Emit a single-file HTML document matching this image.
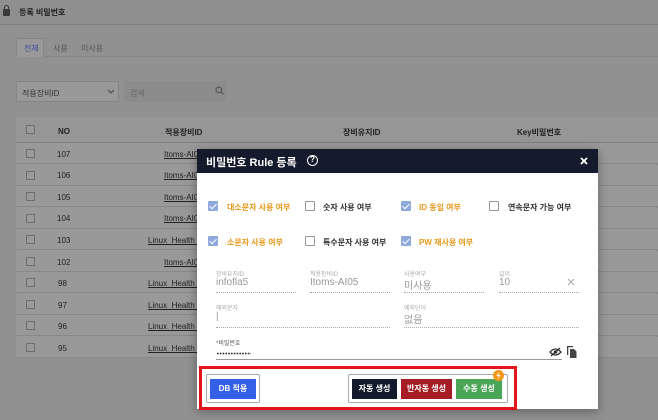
<!DOCTYPE html><html><head><meta charset="utf-8"><style>
*{margin:0;padding:0;box-sizing:border-box}
body{width:658px;height:420px;overflow:hidden;background:#919191;font-family:"Liberation Sans","Noto Sans CJK KR",sans-serif;position:relative;font-size:8px;color:#222}
.a{position:absolute}
.row{position:absolute;left:16px;width:642px;height:21px;border-bottom:1px solid #888;background:#999}
.cb{position:absolute;width:9px;height:9px;border:1px solid #6e6e6e;background:#9a9a9a}
.u{text-decoration:underline}
.m{position:absolute;left:197px;top:149px;width:401px;height:260px;background:#fff;box-shadow:0 2px 10px rgba(0,0,0,.35)}
.mc{position:absolute;width:10px;height:10px;border:1px solid #999;border-radius:1px;background:#fff}
.mc.on{background:#8fa9dc;border-color:#8fa9dc}
.mc.on:after{content:"";position:absolute;left:2px;top:0px;width:3px;height:6px;border:solid #fff;border-width:0 1.5px 1.5px 0;transform:rotate(45deg)}
.lb{position:absolute;font-size:8px;font-weight:bold;color:#333}
.or{color:#e89a1c}
.fl{position:absolute;font-size:6px;color:#aaa}
.fv{position:absolute;font-size:10px;color:#999}
.dl{position:absolute;height:0;border-top:1px dotted #aaa}
.btn{position:absolute;height:20px;color:#fff;font-size:8px;font-weight:bold;text-align:center;line-height:20px}
</style></head><body>
<div class="a" style="left:0;top:0;width:658px;height:25px;background:#8f8f8f;border-bottom:1px solid #7d7d7d"></div>
<div class="a" style="left:3px;top:9px;width:7px;height:7px;background:#3a3a3a;border-radius:1px"></div>
<div class="a" style="left:4px;top:5px;width:5px;height:6px;border:1.5px solid #3a3a3a;border-bottom:none;border-radius:3px 3px 0 0"></div>
<div class="a" style="left:19px;top:7px;font-size:8px;font-weight:bold;color:#222">등록 비밀번호</div>
<div class="a" style="left:16px;top:56px;width:642px;border-top:1px solid #858585"></div>
<div class="a" style="left:16px;top:38px;width:28px;height:19px;background:#999;border:1px solid #858585;border-bottom:none"></div>
<div class="a" style="left:24px;top:43px;color:#3a52a0">전체</div>
<div class="a" style="left:53px;top:43px;color:#555">사용</div>
<div class="a" style="left:81px;top:43px;color:#555">미사용</div>
<div class="a" style="left:16px;top:81px;width:103px;height:21px;background:#999;border:1px solid #858585"></div>
<div class="a" style="left:22px;top:88px;color:#333">적용장비ID</div>
<svg class="a" style="left:107px;top:89px" width="8" height="5" viewBox="0 0 8 5"><path d="M1 1L4 4L7 1" fill="none" stroke="#555" stroke-width="1.3"/></svg>
<div class="a" style="left:124px;top:81px;width:103px;height:21px;background:#8c8c8c"></div>
<div class="a" style="left:130px;top:88px;color:#666">검색</div>
<svg class="a" style="left:215px;top:86px" width="9" height="9" viewBox="0 0 9 9"><circle cx="3.8" cy="3.8" r="2.8" fill="none" stroke="#555" stroke-width="1.2"/><path d="M6 6L8.5 8.5" stroke="#555" stroke-width="1.2"/></svg>
<div class="a" style="left:16px;top:117px;width:642px;height:241px;background:#999;border:1px solid #868686"></div>
<div class="row" style="top:117px;height:26px;background:#969696;border-bottom:1px solid #7f7f7f"></div>
<div class="cb" style="left:26px;top:125px"></div>
<div class="a" style="left:58px;top:127px;font-weight:bold">NO</div>
<div class="a" style="left:165px;top:127px;font-weight:bold">적용장비ID</div>
<div class="a" style="left:343px;top:127px;font-weight:bold">장비유지ID</div>
<div class="a" style="left:517px;top:127px;font-weight:bold">Key비밀번호</div>
<div class="row" style="top:143px"></div><div class="cb" style="left:26px;top:149px"></div><div class="a" style="left:57px;top:150px">107</div><div class="a u" style="left:164px;top:150px">Itoms-AI0</div>
<div class="row" style="top:165px"></div><div class="cb" style="left:26px;top:171px"></div><div class="a" style="left:57px;top:171px">106</div><div class="a u" style="left:164px;top:171px">Itoms-AI0</div>
<div class="row" style="top:186px"></div><div class="cb" style="left:26px;top:192px"></div><div class="a" style="left:57px;top:193px">105</div><div class="a u" style="left:164px;top:193px">Itoms-AI0</div>
<div class="row" style="top:208px"></div><div class="cb" style="left:26px;top:214px"></div><div class="a" style="left:57px;top:214px">104</div><div class="a u" style="left:164px;top:214px">Itoms-AI0</div>
<div class="row" style="top:229px"></div><div class="cb" style="left:26px;top:235px"></div><div class="a" style="left:57px;top:236px">103</div><div class="a u" style="left:148px;top:236px">Linux_Health_</div>
<div class="row" style="top:251px"></div><div class="cb" style="left:26px;top:257px"></div><div class="a" style="left:57px;top:258px">102</div><div class="a u" style="left:164px;top:258px">Itoms-AI0</div>
<div class="row" style="top:272px"></div><div class="cb" style="left:26px;top:278px"></div><div class="a" style="left:58px;top:279px">98</div><div class="a u" style="left:148px;top:279px">Linux_Health_</div>
<div class="row" style="top:294px"></div><div class="cb" style="left:26px;top:300px"></div><div class="a" style="left:58px;top:301px">97</div><div class="a u" style="left:148px;top:301px">Linux_Health_</div>
<div class="row" style="top:315px"></div><div class="cb" style="left:26px;top:321px"></div><div class="a" style="left:58px;top:322px">96</div><div class="a u" style="left:148px;top:322px">Linux_Health_</div>
<div class="row" style="top:337px"></div><div class="cb" style="left:26px;top:343px"></div><div class="a" style="left:58px;top:344px">95</div><div class="a u" style="left:148px;top:344px">Linux_Health_</div>

<div class="m">
<div class="a" style="left:0;top:0;width:401px;height:24px;background:#141b2c"></div>
<div class="a" style="left:9px;top:5px;color:#fff;font-size:11px;font-weight:bold">비밀번호 Rule 등록</div>
<div class="a" style="left:110px;top:6px;width:11px;height:11px;border:1.5px solid #fff;border-radius:50%;color:#fff;font-size:8px;font-weight:bold;text-align:center;line-height:8px">?</div>
<svg class="a" style="left:383px;top:8px" width="8" height="8" viewBox="0 0 8 8"><path d="M1 1L7 7M7 1L1 7" stroke="#fff" stroke-width="1.8"/></svg>
<div class="mc on" style="left:11px;top:52px"></div><div class="lb or" style="left:30px;top:53px">대소문자 사용 여부</div>
<div class="mc" style="left:108px;top:52px"></div><div class="lb" style="left:126px;top:53px">숫자 사용 여부</div>
<div class="mc on" style="left:204px;top:52px"></div><div class="lb or" style="left:222px;top:53px">ID 동일 여부</div>
<div class="mc" style="left:292px;top:52px"></div><div class="lb" style="left:311px;top:53px">연속문자 가능 여부</div>
<div class="mc on" style="left:11px;top:87px"></div><div class="lb or" style="left:30px;top:88px">소문자 사용 여부</div>
<div class="mc" style="left:108px;top:87px"></div><div class="lb" style="left:126px;top:88px">특수문자 사용 여부</div>
<div class="mc on" style="left:204px;top:87px"></div><div class="lb or" style="left:222px;top:88px">PW 재사용 여부</div>
<div class="fl" style="left:19px;top:120px">장비유지ID</div><div class="fv" style="left:19px;top:128px">infofla5</div><div class="dl" style="left:19px;top:143px;width:80px"></div>
<div class="fl" style="left:113px;top:120px">적용장비ID</div><div class="fv" style="left:113px;top:128px">Itoms-AI05</div><div class="dl" style="left:113px;top:143px;width:80px"></div>
<div class="fl" style="left:207px;top:120px">사용여부</div><div class="fv" style="left:207px;top:128px">미사용</div><div class="dl" style="left:207px;top:143px;width:80px"></div>
<div class="fl" style="left:302px;top:120px">길이</div><div class="fv" style="left:302px;top:128px">10</div><div class="dl" style="left:302px;top:143px;width:80px"></div>
<svg class="a" style="left:370px;top:129px" width="8" height="8" viewBox="0 0 8 8"><path d="M1 1L7 7M7 1L1 7" stroke="#aaa" stroke-width="1"/></svg>
<div class="fl" style="left:19px;top:154px">예외문자</div><div class="fv" style="left:19px;top:162px">|</div><div class="dl" style="left:19px;top:178px;width:174px"></div>
<div class="fl" style="left:207px;top:154px">예외단어</div><div class="fv" style="left:207px;top:162px">없음</div><div class="dl" style="left:207px;top:178px;width:175px"></div>
<div class="fl" style="left:19px;top:189px;color:#555">*비밀번호</div>
<svg class="a" style="left:19px;top:203px" width="36" height="3" viewBox="0 0 36 3"><path d="M1 1.5H35" stroke="#222" stroke-width="1.6" stroke-dasharray="1.6 1.2"/></svg>
<div class="a" style="left:19px;top:210px;width:346px;border-top:1px solid #999"></div>
<svg class="a" style="left:352px;top:198px" width="13" height="10" viewBox="0 0 13 10"><path d="M1 5Q6.5-1 12 5Q6.5 11 1 5Z" fill="none" stroke="#333" stroke-width="1.3"/><circle cx="6.5" cy="5" r="1.8" fill="#333"/><path d="M2 9L11 1" stroke="#333" stroke-width="1.3"/></svg>
<svg class="a" style="left:370px;top:197px" width="10" height="12" viewBox="0 0 10 12"><path d="M0 0H6V1.3H1.3V9H0Z" fill="#444"/><path d="M3 3H7L9.5 5.5V12H3Z" fill="#444"/></svg>
<div class="a" style="left:2px;top:217px;width:318px;height:44px;border:3px solid #e0141a"></div>
<div class="a" style="left:9px;top:225px;width:54px;height:29px;border:1px solid #aaa;border-radius:2px"></div>
<div class="btn" style="left:13px;top:230px;width:46px;background:#3360e6">DB 적용</div>
<div class="a" style="left:151px;top:225px;width:160px;height:29px;border:1px solid #aaa;border-radius:2px"></div>
<div class="btn" style="left:155px;top:230px;width:45px;background:#141b2c">자동 생성</div>
<div class="btn" style="left:204px;top:230px;width:51px;background:#a51c25">반자동 생성</div>
<div class="btn" style="left:259px;top:230px;width:46px;background:#4aa656">수동 생성</div>
<div class="a" style="left:296px;top:221px;width:11px;height:11px;border-radius:50%;background:#f29a1a"></div>
<svg class="a" style="left:299px;top:223px" width="5" height="7" viewBox="0 0 5 7"><path d="M3 0L0.5 4H2.5L2 7L4.5 3H2.5Z" fill="#fff"/></svg>
</div>
</body></html>
